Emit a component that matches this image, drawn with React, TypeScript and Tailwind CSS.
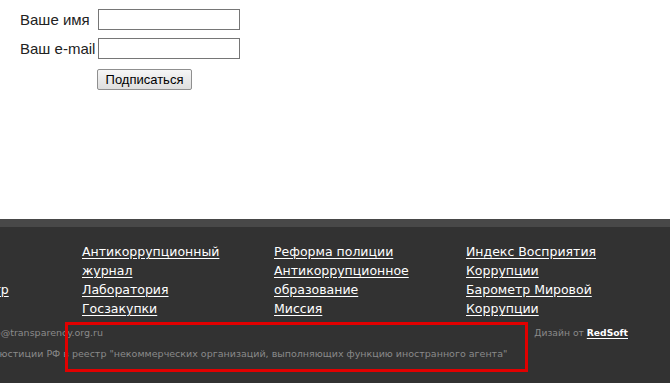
const FOOTER_COLUMNS: string[][] = [
  ['Антикоррупционный журнал', 'Лаборатория', 'Госзакупки'],
  ['Реформа полиции', 'Антикоррупционное образование', 'Миссия'],
  ['Индекс Восприятия Коррупции', 'Барометр Мировой Коррупции'],
];

const ABOUT_LINKS = ['О нас', 'Новости', 'Правовой центр', 'Контакты'];

function FooterLink({ children }: { children: string }) {
  return (
    <li className="text-[12.5px] leading-[19px]">
      <a href="#" className="text-white underline underline-offset-2">
        {children}
      </a>
    </li>
  );
}

function SubscribeForm() {
  return (
    <form className="pl-[20px] pt-[9px] font-['Liberation_Sans',Arial,sans-serif] text-[#222]">
      <div className="flex flex-col gap-[8px]">
        <label className="flex items-center">
          <span className="w-[78px] text-[15px] leading-[21px]">Ваше имя</span>
          <input type="text" className="h-[21px] w-[142px] border border-[#767676] bg-white" />
        </label>
        <label className="flex items-center">
          <span className="w-[78px] text-[15px] leading-[21px]">Ваш e-mail</span>
          <input type="text" className="h-[21px] w-[142px] border border-[#767676] bg-white" />
        </label>
        <div className="pl-[77px]">
          <button
            type="button"
            className="h-[21px] w-[95px] rounded-[2px] border border-[#8f8f8f] bg-gradient-to-b from-[#f6f6f6] to-[#dedede] text-[13px] leading-[19px] text-black"
          >
            Подписаться
          </button>
        </div>
      </div>
    </form>
  );
}

function Footer() {
  return (
    <footer className="mt-[128px] overflow-hidden border-t-[8px] border-[#484848] bg-[#323232] font-['DejaVu_Sans',Verdana,sans-serif]">
      <div className="-ml-[98px] flex pt-[15px]">
        <ul className="w-[180px] shrink-0">
          {ABOUT_LINKS.map((item) => (
            <FooterLink key={item}>{item}</FooterLink>
          ))}
        </ul>
        {FOOTER_COLUMNS.map((col, i) => (
          <ul key={i} className="w-[192px] shrink-0 pr-[20px]">
            {col.map((item) => (
              <FooterLink key={item}>{item}</FooterLink>
            ))}
          </ul>
        ))}
      </div>

      <div className="relative mt-[4px] flex justify-between pb-[20px] leading-[21px] text-[#8a8a8a]">
        <div className="-ml-[121px] whitespace-nowrap text-[9.5px]">
          <p>Электронная почта: info@transparency.org.ru</p>
          <p>
            Внесен Министерством юстиции РФ в реестр "некоммерческих организаций, выполняющих функцию иностранного агента"
          </p>
        </div>
        <p className="shrink-0 pr-[42px] text-[9.2px]">
          Дизайн от{' '}
          <a href="#" className="font-bold text-white underline underline-offset-2">
            RedSoft
          </a>
        </p>
        {/* highlight frame */}
        <div className="absolute left-[65px] top-0 h-[50px] w-[463px] border-[3px] border-[#e10000]" />
      </div>
    </footer>
  );
}

export default function App() {
  return (
    <div className="min-h-[383px] bg-white">
      <SubscribeForm />
      <Footer />
    </div>
  );
}
